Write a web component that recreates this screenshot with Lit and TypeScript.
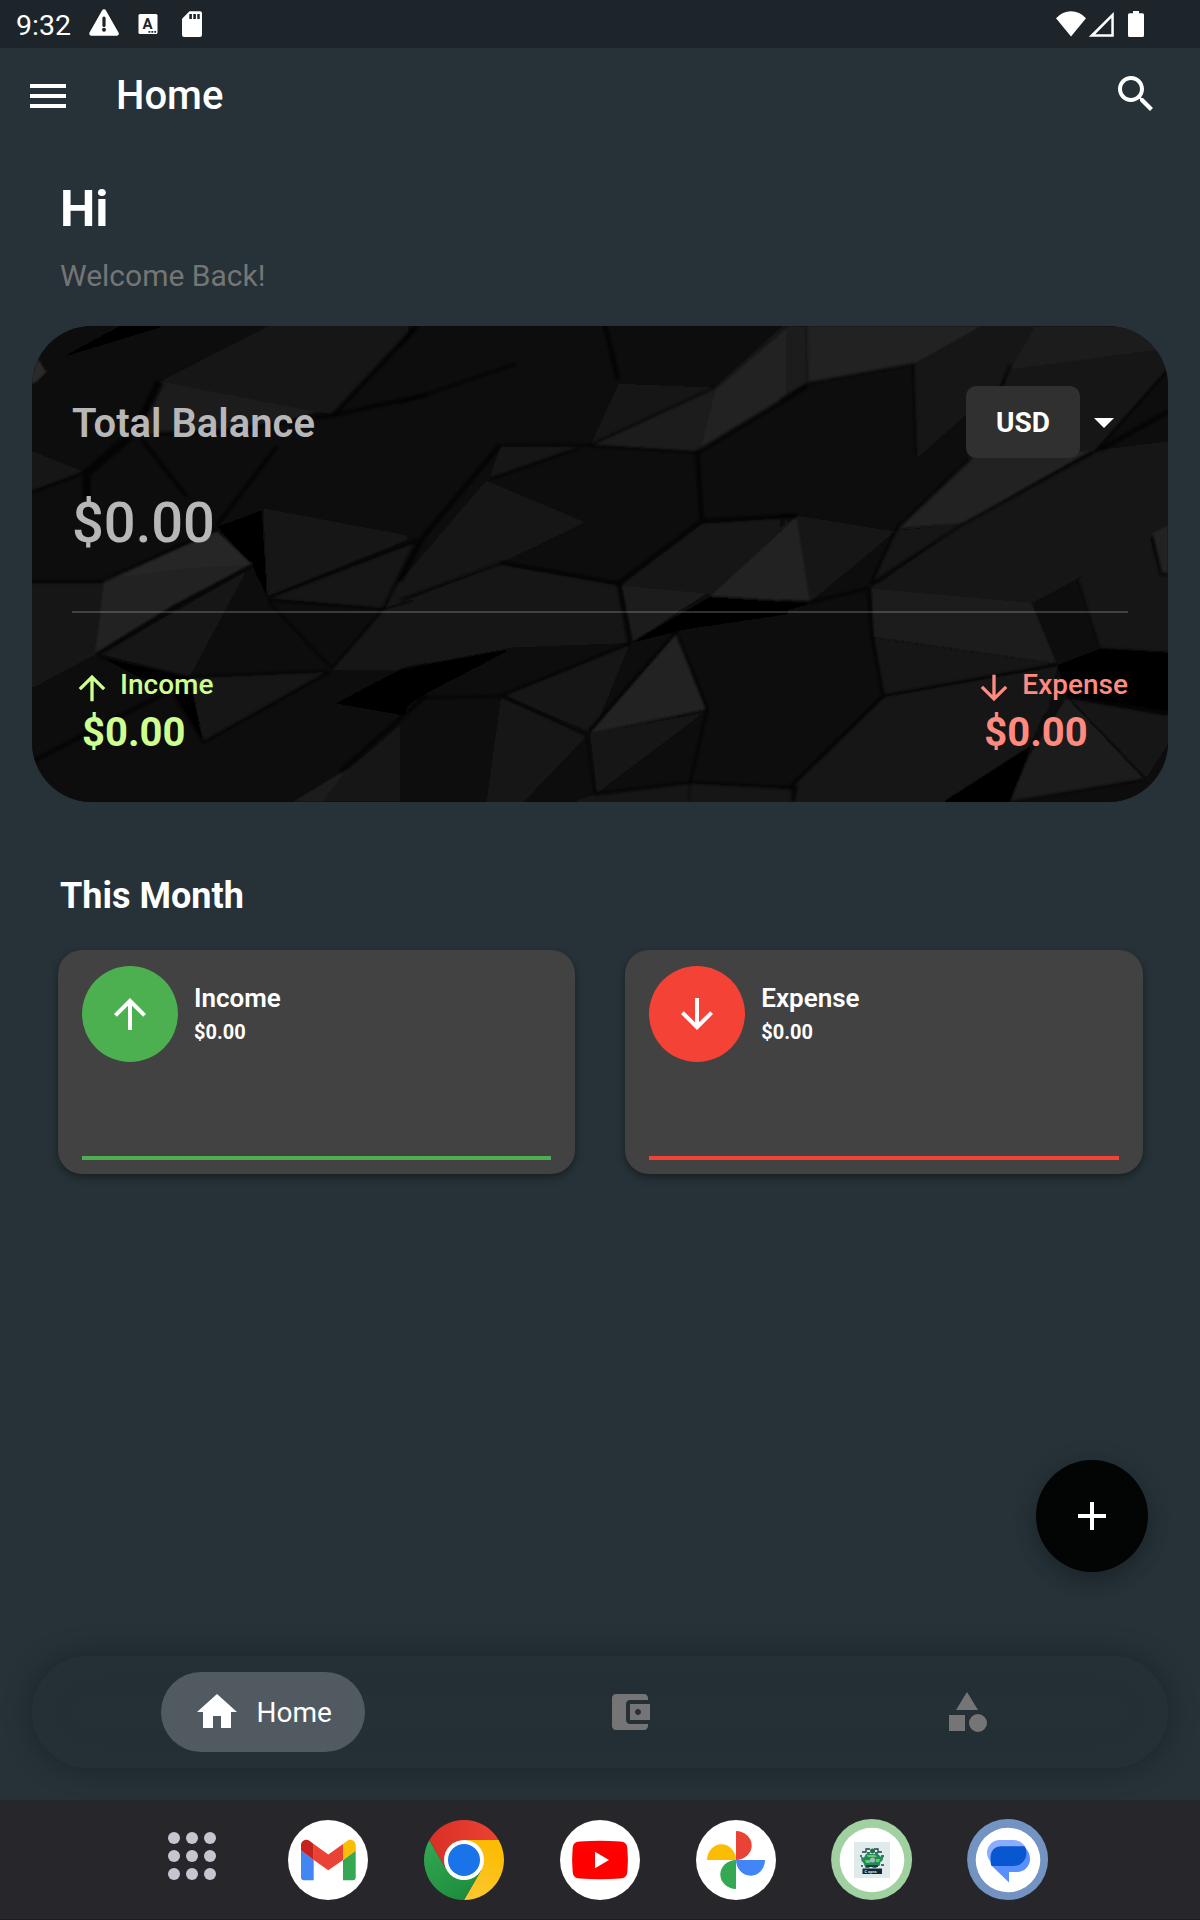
import { LitElement, html, css, svg } from "lit";
import { customElement, property } from "lit/decorators.js";

type Facet = [points: string, fill: string];
type Crease = [points: string, width: number];

interface Tile {
  x: number;
  facets: Facet[];
  creases: Crease[];
}

/* The facets of the dark low-poly surface, three tiles side by side at triple resolution. */
const TILES: Tile[] = [
  {
    x: 20,
    facets: [
      ["0,0 1220,0 1220,1500 0,1500", "#0f0f0f"],
      ["36,33 300,33 120,130 60,110", "#0d0d0d"],
      ["300,33 435,33 120,130", "#020202"],
      ["52,130 78,170 45,205 30,205", "#2a2a2a"],
      ["120,130 440,33 500,33 428,192", "#101010"],
      ["500,33 745,33 428,192", "#0b0b0b"],
      ["745,33 1190,33 940,300 428,196", "#141414"],
      ["1190,33 1220,33 1220,240 940,300", "#101010"],
      ["425,198 890,290 760,330 600,350 400,356 345,365", "#1b1b1b"],
      ["130,170 420,196 195,465 36,408 36,205", "#101010"],
      ["36,408 190,470 36,528", "#151515"],
      ["36,535 190,540 245,797 36,800", "#0a0a0a"],
      ["345,370 220,540 250,795 580,640", "#111"],
      ["365,372 770,372 770,395 590,632", "#090909"],
      ["590,350 940,300 1220,310 1085,310 780,395", "#0b0b0b"],
      ["1085,310 1220,325 1220,660 1180,660", "#0a0a0a"],
      ["780,400 1085,310 1180,662 728,577", "#0e0e0e"],
      ["590,632 770,400 728,580", "#0c0c0c"],
      ["590,635 726,585 742,850 695,750", "#060606"],
      ["250,797 590,650 695,748 460,870 225,1015", "#222"],
      ["270,790 590,650 695,748 480,762", "#282828"],
      ["730,580 1185,665 742,845", "#141414"],
      ["1195,680 1090,880 745,850", "#171717"],
      ["1195,690 1220,680 1220,840 1095,878", "#131313"],
      ["36,803 245,803 225,1020 36,1120", "#131313"],
      ["235,1018 682,765 510,1087", "#121212"],
      ["690,765 745,860 930,1065 510,1087", "#0f0f0f"],
      ["745,858 1090,882 935,1060", "#070707"],
      ["1090,885 1220,850 1220,1060 1140,1065 935,1065", "#131313"],
      ["36,1125 225,1030 440,1125 36,1335", "#101010"],
      ["240,1027 520,1090 550,1282 460,1140", "#060606"],
      ["510,1090 925,1070 550,1282", "#141414"],
      ["36,1345 460,1135 550,1282 200,1460 36,1460", "#111"],
      ["550,1285 925,1070 1140,1068 760,1255 400,1460 200,1460", "#101010"],
      ["750,1258 1140,1065 1220,1055 1220,1150 980,1360", "#080808"],
      ["950,1165 1140,1065 1220,1055 1220,1150 1150,1200", "#040404"],
      ["760,1258 980,1362 820,1460 400,1460", "#0c0c0c"],
      ["985,1360 910,1460 820,1460", "#1c1c1c"],
      ["985,1362 1220,1160 1220,1460 910,1460", "#121212"],
    ],
    creases: [
      ["1190,33 940,300", 14],
      ["420,200 345,350 200,475 200,550", 26],
      ["36,532 190,475", 8],
      ["365,372 500,545", 12],
      ["410,356 600,350 940,300 1220,240", 12],
      ["770,395 590,632", 12],
      ["36,800 245,800 590,640", 8],
      ["235,1020 460,880 695,752", 8],
      ["745,848 1190,675 1090,880", 8],
      ["745,855 1090,882 935,1060 745,860", 7],
      ["235,1025 500,1085 920,1068", 6],
      ["36,1340 440,1132", 12],
      ["460,1140 550,1282 930,1070", 8],
      ["1140,1066 1220,1050", 8],
      ["960,1370 1220,1140", 12],
    ],
  },
  {
    x: 400,
    facets: [
      ["0,0 1220,0 1220,1500 0,1500", "#0f0f0f"],
      ["0,33 610,33 650,195 350,145 0,260", "#0f0f0f"],
      ["0,270 350,148 650,205 310,383 0,320", "#111"],
      ["310,383 650,205 570,385", "#0d0d0d"],
      ["625,33 1150,33 945,215 660,198", "#0e0e0e"],
      ["655,205 945,217 570,390", "#121212"],
      ["1150,33 1220,33 1220,215 897,410 945,215", "#212121"],
      ["945,217 897,410 575,390", "#1b1b1b"],
      ["0,320 300,388 70,665 0,650", "#0a0a0a"],
      ["300,395 545,395 270,490", "#161616"],
      ["285,400 265,495 0,805 70,665", "#0d0d0d"],
      ["0,665 60,675 0,780", "#101010"],
      ["258,497 555,622 300,745 0,855 0,800", "#151515"],
      ["275,490 560,398 888,415 560,622", "#111"],
      ["888,415 905,618 655,803 558,625", "#0e0e0e"],
      ["900,410 1220,220 1220,360 920,400", "#090909"],
      ["900,410 1220,360 1220,600 905,615", "#0d0d0d"],
      ["558,628 320,740 652,800", "#070707"],
      ["0,860 300,748 655,810 690,985 340,998 0,1060", "#131313"],
      ["905,625 1190,605 930,840 665,808", "#121212"],
      ["665,810 920,835 700,980", "#1a1a1a"],
      ["1190,605 1220,605 1220,862 930,842", "#222"],
      ["930,845 1220,862 1220,890 850,945 690,985", "#030303"],
      ["0,1062 340,1000 690,985 300,1142 0,1155", "#080808"],
      ["0,1065 330,1003 50,1150 0,1200", "#030303"],
      ["310,1142 690,987 820,955 565,1250", "#121212"],
      ["690,987 820,955 600,1210", "#0c0c0c"],
      ["40,1158 305,1148 260,1460 0,1460 0,1200", "#0e0e0e"],
      ["303,1150 560,1262 372,1460 260,1460", "#181818"],
      ["560,1265 582,1440 510,1460 372,1460", "#0d0d0d"],
      ["830,955 918,1182 570,1255", "#242424"],
      ["838,947 1220,890 1220,1190 925,1182", "#0f0f0f"],
      ["1220,960 960,1180 1220,1195", "#0b0b0b"],
      ["570,1258 915,1192 590,1436", "#131313"],
      ["915,1190 872,1400 590,1436", "#0b0b0b"],
      ["925,1190 1220,1190 1185,1415 875,1400", "#0e0e0e"],
      ["520,1460 590,1437 870,1405 1180,1420 1185,1460", "#191919"],
    ],
    creases: [
      ["0,95 50,33", 10],
      ["612,20 655,195", 15],
      ["0,265 350,146", 8],
      ["310,388 570,390 945,218 1160,33", 6],
      ["560,392 888,412", 7],
      ["300,390 70,665 0,800", 14],
      ["540,398 270,492", 8],
      ["1220,215 892,412 905,618 1190,602", 13],
      ["905,618 655,805 300,742", 11],
      ["655,805 688,985", 11],
      ["300,745 0,855", 6],
      ["0,1150 300,1143 690,985", 7],
      ["310,1143 560,1262 585,1440", 6],
      ["565,1250 828,950 922,1180 870,1402", 8],
      ["585,1438 870,1402 1190,1420", 8],
      ["870,1402 865,1460", 4],
      ["1190,1410 1180,1460", 8],
    ],
  },
  {
    x: 780,
    facets: [
      ["0,0 1220,0 1220,1500 0,1500", "#111"],
      ["0,33 605,33 400,148 82,205 0,253", "#212121"],
      ["0,33 80,33 82,205 0,253", "#1e1e1e"],
      ["605,33 765,33 690,165 405,148", "#161616"],
      ["765,33 1000,33 1150,103 690,165", "#1d1d1d"],
      ["1000,33 1164,33 1164,103 1130,103", "#1d1d1d"],
      ["690,167 1164,103 1164,160 940,410 560,430", "#151515"],
      ["1164,165 1164,290 960,405", "#070707"],
      ["400,150 690,167 660,210 410,430", "#161616"],
      ["660,210 410,430 560,440 600,300", "#0f0f0f"],
      ["0,265 85,207 398,150 150,350 0,370", "#0a0a0a"],
      ["400,152 410,430 150,350", "#101010"],
      ["0,370 140,353 60,590 0,600", "#0e0e0e"],
      ["140,355 400,433 60,590", "#0b0b0b"],
      ["50,600 405,435 560,430 350,640", "#111"],
      ["572,428 930,408 550,625 352,640", "#242424"],
      ["545,628 960,405 1164,380 1164,640 760,862 280,820", "#161616"],
      ["345,648 545,628 275,805", "#141414"],
      ["640,640 1060,700 760,862 275,815", "#181818"],
      ["52,603 345,650 90,862", "#151515"],
      ["0,640 50,605 90,862 0,855", "#222"],
      ["0,857 90,862 70,880 0,890", "#030303"],
      ["345,650 270,810 90,862", "#0a0a0a"],
      ["0,890 265,822 310,1140 0,1190", "#0d0d0d"],
      ["275,820 755,862 830,1045 280,965", "#1a1a1a"],
      ["280,968 830,1048 310,1142", "#121212"],
      ["755,865 895,795 960,1000 830,1045", "#0a0a0a"],
      ["895,795 1110,670 1140,780 1164,780 1164,1010 960,1000", "#181818"],
      ["1117,655 1164,630 1164,775 1145,775", "#202020"],
      ["960,1000 1164,1012 1164,1190 860,1142 830,1050", "#060606"],
      ["0,1190 305,1148 30,1410 0,1415", "#0c0c0c"],
      ["315,1146 830,1055 800,1200 740,1300 490,1460 38,1460 38,1412", "#171717"],
      ["490,1460 755,1290 690,1460", "#030303"],
      ["850,1140 740,1310 790,1200", "#080808"],
      ["860,1148 1090,1392 690,1460 750,1320", "#1b1b1b"],
      ["865,1148 1164,1200 1164,1290 1100,1390", "#121212"],
      ["1110,1200 1164,1200 1164,1290", "#181818"],
      ["690,1460 1090,1395 1164,1350 1164,1460", "#0a0a0a"],
      ["0,1425 38,1418 38,1460 0,1460", "#191919"],
    ],
    creases: [
      ["80,33 84,205", 3],
      ["0,255 82,205 400,148 408,420", 6],
      ["690,150 665,215", 10],
      ["572,430 350,640 272,805", 9],
      ["1164,165 950,408", 7],
      ["960,405 1164,290", 14],
      ["950,408 545,630 275,805", 7],
      ["0,600 50,602", 9],
      ["0,862 90,862 265,820 275,960 310,1142", 9],
      ["310,1142 830,1048", 7],
      ["310,1142 35,1412", 10],
      ["1115,665 1142,778 1164,780", 7],
      ["0,1418 38,1414 38,1460", 7],
      ["895,795 960,1000 1164,1012", 4],
      ["860,1142 1164,1195", 14],
      ["690,1460 1090,1394", 5],
    ],
  },
];

const ICONS = {
  menu: "M3 18h18v-2H3v2zm0-5h18v-2H3v2zm0-7v2h18V6H3z",
  search:
    "M15.5 14h-.79l-.28-.27C15.41 12.59 16 11.11 16 9.5 16 5.91 13.09 3 9.5 3S3 5.91 3 9.5 5.91 16 9.5 16c1.61 0 3.09-.59 4.23-1.57l.27.28v.79l5 4.99L20.49 19l-4.99-5zm-6 0C7.01 14 5 11.99 5 9.5S7.01 5 9.5 5 14 7.01 14 9.5 11.99 14 9.5 14z",
  up: "M4 12l1.41 1.41L11 7.83V20h2V7.83l5.58 5.59L20 12l-8-8-8 8z",
  down: "M20 12l-1.41-1.41L13 16.17V4h-2v12.17l-5.58-5.59L4 12l8 8 8-8z",
  dropDown: "M7 10l5 5 5-5z",
  plus: "M19 13h-6v6h-2v-6H5v-2h6V5h2v6h6v2z",
  home: "M10 20v-6h4v6h5v-8h3L12 3 2 12h3v8z",
  wallet:
    "M21 18v1c0 1.1-.9 2-2 2H5c-1.11 0-2-.9-2-2V5c0-1.1.89-2 2-2h14c1.1 0 2 .9 2 2v1h-9c-1.11 0-2 .9-2 2v8c0 1.1.89 2 2 2h9zm-9-2h10V8H12v8zm4-2.5c-.83 0-1.5-.67-1.5-1.5s.67-1.5 1.5-1.5 1.5.67 1.5 1.5-.67 1.5-1.5 1.5z",
  category: "M12 2l-5.5 9h11zM17.5 13a4.5 4.5 0 1 0 0 9 4.5 4.5 0 0 0 0-9zM3 13.5h8v8H3z",
};

@customElement("md-icon")
export class MdIcon extends LitElement {
  static styles = css`
    :host { display: block; width: 48px; height: 48px; flex: none; }
    .glyph { display: block; width: 100%; height: 100%; fill: currentColor; }
  `;
  @property() name: keyof typeof ICONS = "menu";
  render() {
    return html`<svg class="glyph" viewBox="0 0 24 24"><path d=${ICONS[this.name]} /></svg>`;
  }
}

@customElement("status-bar")
export class StatusBar extends LitElement {
  static styles = css`
    :host {
      display: flex; align-items: center; height: 48px; box-sizing: border-box;
      padding: 2px 56px 0 16px; background: #1d252a; color: #fff;
    }
    .time { font-size: 28.5px; line-height: 32px; width: 73px; padding-top: 1px; }
    .icon { display: block; height: 30px; flex: none; fill: #fff; margin-top: -2px; }
    .right { margin-left: auto; display: flex; }
    .letter { font: 700 15px Roboto, sans-serif; fill: #1d252a; }
  `;
  render() {
    return html`
      <span class="time">9:32</span>
      <svg class="icon" width="120" viewBox="89 9 120 30">
        <path d="M104 11.5 L116.500 33.500 H91.500 Z" stroke="#fff" stroke-width="4.500" stroke-linejoin="round" />
        <path d="M104 18v7.500" stroke="#1d252a" stroke-width="3.200" stroke-linecap="round" />
        <circle cx="104" cy="29.700" r="2" fill="#1d252a" />
        <rect x="138.500" y="14" width="19" height="20" rx="1.500" />
        <text class="letter" x="142.600" y="28.800">A</text>
        <path d="M148.500 31h1.800v1.800h-1.800zM151.400 31h1.800v1.800h-1.800zM154.300 31h1.800v1.800h-1.800z" fill="#1d252a" />
        <path d="M189.500 11.300H200a2 2 0 0 1 2 2V35a2 2 0 0 1-2 2h-16a2 2 0 0 1-2-2V18.800z" />
        <path d="M189.300 14h2.600v5h-2.600zM193.300 14h2.600v5h-2.600zM197.300 14h2.400v5h-2.400z" fill="#1d252a" />
      </svg>
      <svg class="icon right" width="88" viewBox="1056 9 88 30">
        <path d="M1071 36.500L1056 18.200Q1062.500 11.200 1071 11.200T1086 18.200z" />
        <path d="M1113.800 12v24.800h-25zm-2.500 6l-16 16.200h16z" fill-rule="evenodd" />
        <path d="M1133 11h6v2.300h3.500a1.500 1.500 0 0 1 1.500 1.500V35.500a1.500 1.500 0 0 1-1.500 1.500h-13a1.500 1.500 0 0 1-1.500-1.500V14.800a1.500 1.500 0 0 1 1.500-1.500h3.500z" />
      </svg>
    `;
  }
}

@customElement("balance-card")
export class BalanceCard extends LitElement {
  static styles = css`
    :host {
      display: block; position: relative; margin: 0 32px; height: 476px;
      border-radius: 60px; overflow: hidden; background: #0f0f0f;
    }
    .art { position: absolute; inset: 0; width: 100%; height: 100%; }
    .content { position: relative; padding: 60px 40px 0; }
    .row { display: flex; justify-content: space-between; align-items: center; }
    .label { font-size: 40px; line-height: 48px; font-weight: 600; color: #b7b7b7; padding-top: 4px; }
    .picker { display: flex; align-items: center; color: #fff; }
    .currency {
      background: #303030; border-radius: 10px; height: 72px; width: 114px;
      display: flex; align-items: center; justify-content: center;
      font-size: 28px; font-weight: 700;
    }
    .amount { font-size: 56px; line-height: 66px; font-weight: 500; color: #b7b7b7; margin-top: 32px; }
    .rule { height: 2px; background: rgba(255, 255, 255, 0.19); margin-top: 55px; }
    .flows { display: flex; justify-content: space-between; margin-top: 55px; }
    .income { color: #ccff90; }
    .expense { color: #ff8a80; }
    .head { display: flex; gap: 8px; height: 41px; }
    .arrow { width: 40px; height: 40px; }
    .name { font-size: 28px; line-height: 33px; font-weight: 500; }
    .sum { font-size: 40px; line-height: 48px; font-weight: 700; padding-left: 10px; }
  `;
  render() {
    return html`
      <svg class="art" viewBox="32 326 1136 476" preserveAspectRatio="none">
        <filter id="soft" x="-5%" y="-5%" width="110%" height="110%">
          <feGaussianBlur stdDeviation="1.600" />
        </filter>
        <filter id="edge" x="0" y="0" width="100%" height="100%">
          <feGaussianBlur stdDeviation="0.900" />
        </filter>
        <linearGradient id="fade" gradientUnits="userSpaceOnUse" x1="0" y1="0" x2="60" y2="0">
          <stop offset="0" stop-color="#000" /><stop offset="1" stop-color="#fff" />
        </linearGradient>
        <mask id="join" maskUnits="userSpaceOnUse" x="0" y="0" width="1220" height="1500">
          <rect width="1220" height="1500" fill="url(#fade)" />
        </mask>
        <g filter="url(#edge)">
          ${TILES.map(
            (t, i) => svg`<g transform="translate(${t.x} 315) scale(0.33333)">
              <g mask=${i ? "url(#join)" : "none"}>
                ${t.facets.map(([p, f]) => svg`<polygon points=${p} fill=${f} />`)}
              </g>
            </g>`
          )}
        </g>
        <g filter="url(#soft)">
          ${TILES.map(
            (t) => svg`<g transform="translate(${t.x} 315) scale(0.33333)" fill="none" stroke="#000" stroke-opacity="0.720">
              ${t.creases.map(([p, w]) => svg`<polyline points=${p} stroke-width=${w} />`)}
            </g>`
          )}
        </g>
      </svg>
      <div class="content">
        <div class="row">
          <span class="label">Total Balance</span>
          <div class="picker">
            <span class="currency">USD</span>
            <md-icon name="dropDown"></md-icon>
          </div>
        </div>
        <div class="amount">$0.00</div>
        <div class="rule"></div>
        <div class="flows">
          <div class="income">
            <div class="head"><md-icon class="arrow" name="up"></md-icon><span class="name">Income</span></div>
            <div class="sum">$0.00</div>
          </div>
          <div class="expense">
            <div class="head"><md-icon class="arrow" name="down"></md-icon><span class="name">Expense</span></div>
            <div class="sum">$0.00</div>
          </div>
        </div>
      </div>
    `;
  }
}

@customElement("month-card")
export class MonthCard extends LitElement {
  static styles = css`
    :host {
      display: flex; flex-direction: column; justify-content: space-between;
      box-sizing: border-box; height: 224px; padding: 16px 24px 14px;
      border-radius: 24px; background: #424242; color: #fff;
      box-shadow: 0 4px 8px rgba(0, 0, 0, 0.26), 0 2px 4px rgba(0, 0, 0, 0.14);
    }
    .head { display: flex; gap: 16px; }
    .disc {
      width: 96px; height: 96px; border-radius: 50%;
      display: flex; align-items: center; justify-content: center;
    }
    .line { height: 4px; }
    .up { background: #4caf50; }
    .down { background: #f44336; }
    .name { font-size: 26px; line-height: 32px; font-weight: 600; margin-top: 16px; }
    .sum { font-size: 20px; line-height: 24px; font-weight: 700; margin-top: 6px; }
  `;
  @property() label = "";
  @property() kind: "up" | "down" = "up";
  render() {
    return html`
      <div class="head">
        <div class="disc ${this.kind}"><md-icon name=${this.kind}></md-icon></div>
        <div>
          <div class="name">${this.label}</div>
          <div class="sum">$0.00</div>
        </div>
      </div>
      <div class="line ${this.kind}"></div>
    `;
  }
}

@customElement("bottom-nav")
export class BottomNav extends LitElement {
  static styles = css`
    :host {
      display: flex; align-items: center; box-sizing: border-box;
      height: 112px; margin: 0 32px; padding-left: 128.5px; border-radius: 56px;
      background: #253036; box-shadow: 0 0 30px rgba(0, 0, 0, 0.3), inset 0 0 32px rgba(38, 50, 56, 0.8);
      color: #757575;
    }
    .active {
      display: flex; align-items: center; height: 80px; border-radius: 40px;
      background: #515a61; color: #fff; padding-left: 32px; gap: 16px; font-size: 28px;
      box-sizing: border-box; width: 204px;
    }
    .wallet { margin-left: 241.5px; }
    .category { margin-left: 289px; }
  `;
  render() {
    return html`
      <div class="active"><md-icon name="home"></md-icon><span>Home</span></div>
      <md-icon class="wallet" name="wallet"></md-icon>
      <md-icon class="category" name="category"></md-icon>
    `;
  }
}

@customElement("app-dock")
export class AppDock extends LitElement {
  static styles = css`
    :host {
      display: flex; align-items: center; gap: 52px; box-sizing: border-box;
      height: 120px; padding-left: 150px; background: #27262b; border-bottom: 1px solid #1d1c20;
    }
    .app { display: block; width: 84px; height: 84px; flex: none; }
    .grid { display: block; width: 84px; height: 84px; fill: #c8c4d0; }
    .tiny { font: 700 4px Roboto, sans-serif; fill: #d5e4e2; }
  `;
  render() {
    const dots = [24, 42, 60].flatMap((x) => [20, 38, 56].map((y) => svg`<circle cx=${x} cy=${y} r="6" />`));
    return html`
      <svg class="grid" viewBox="0 0 84 84">${dots}</svg>
      <svg class="app" viewBox="-42 -42 84 84">
        <circle r="40" fill="#fff" />
        <path d="M-27 -9.500L-14.300 0V20.300H-24a3 3 0 0 1-3-3z" fill="#4285f4" />
        <path d="M27.700 -9.500L15 0V20.300H24.700a3 3 0 0 0 3-3z" fill="#34a853" />
        <path d="M15 -16L19 -19C22.500 -21.800 27.700 -19.500 27.700 -14.500V-9.500L15 0z" fill="#fbbc04" />
        <path d="M-14.300 -16L0.300 -5.500 15 -16V0L0.300 10.300 -14.300 0z" fill="#ea4335" />
        <path d="M-14.300 -16L-18.300 -19C-22 -21.800 -27 -19.500 -27 -14.500V-9.500L-14.300 0z" fill="#c5221f" />
      </svg>
      <svg class="app" viewBox="-42 -42 84 84">
        <defs>
          <linearGradient id="cr" x1="0" y1="0" x2="1" y2="0"><stop offset="0" stop-color="#d93025" /><stop offset="1" stop-color="#ea4335" /></linearGradient>
          <linearGradient id="cg" x1="0" y1="0" x2=".6" y2="1"><stop offset="0" stop-color="#34a853" /><stop offset="1" stop-color="#1e8e3e" /></linearGradient>
          <linearGradient id="cy" x1="0" y1="1" x2=".4" y2="0"><stop offset="0" stop-color="#fcc934" /><stop offset="1" stop-color="#fbbc04" /></linearGradient>
        </defs>
        <path d="M0 -20H34.640A40 40 0 0 1 0 40L17.320 10z" fill="url(#cy)" />
        <path d="M-17.320 10L-34.640 -20A40 40 0 0 0 0 40L17.320 10z" fill="url(#cg)" />
        <path d="M0 -20H34.640A40 40 0 0 0 -34.640 -20L-17.320 10z" fill="url(#cr)" />
        <circle r="20" fill="#fff" /><circle r="16" fill="#1a73e8" />
      </svg>
      <svg class="app" viewBox="-42 -42 84 84">
        <circle r="40" fill="#fff" />
        <path d="M-20 -18.500Q0 -20 20 -18.500C25.500 -18.200 27 -16 27.400 -11Q28.400 0 27.400 11C27 16 25.500 18.200 20 18.500Q0 20 -20 18.500C-25.500 18.200 -27 16 -27.400 11Q-28.400 0 -27.400 -11C-27 -16 -25.500 -18.200 -20 -18.500z" fill="#f00" />
        <path d="M-5 -8.200L9 0 -5 8.200z" fill="#fff" />
      </svg>
      <svg class="app" viewBox="-42 -42 84 84">
        <circle r="40" fill="#fff" />
        <path d="M0 0V-29C8.500 -29 15.700 -22.500 15.700 -14.500S8.500 0 0 0z" fill="#ea4335" />
        <path d="M0 0H29C29 8.500 22.500 15.700 14.500 15.700S0 8.500 0 0z" fill="#4285f4" />
        <path d="M0 0V29C-8.500 29 -15.700 22.500 -15.700 14.500S-8.500 0 0 0z" fill="#34a853" />
        <path d="M0 0H-29C-29 -8.500 -22.500 -15.700 -14.500 -15.700S0 -8.500 0 0z" fill="#fbbc04" />
      </svg>
      <svg class="app" viewBox="-42 -42 84 84">
        <circle cx="-.4" cy="-.5" r="40.500" fill="#a1d1a1" />
        <circle r="32.300" fill="#fff" />
        <rect x="-18" y="-18" width="36" height="36" fill="#dfeaea" />
        <path d="M-10 -8h4v-3h4M10 -8h-4v-3h-4M-10 -4h-2M12 -4h-3M-9 6h-2M12 5h-3M-5 -7h3M6 -7h-3" stroke="#234046" stroke-width="1.300" fill="none" />
        <circle cx="0.500" cy="-9" r="2.500" fill="#226b52" />
        <path d="M-11 -3l3 .5 2-3.500h12l3 3 2.500-.5-1 4-2 1.500-1 4h-3v2h-4v-2h-3v2h-4l-2-5-2-2z" fill="#218a58" />
        <path d="M-5 -5h8l2 2h-9zM-7 0h5v3h-4zM4 -1h4l-1 3h-3z" fill="#5cd06b" />
        <circle cx=".5" cy="0" r="2.600" fill="#a6b6c4" />
        <path d="M-6 5h12v2h-12z" fill="#173c40" />
        <rect x="-9.500" y="8.500" width="19.500" height="5.500" fill="#0f2a36" />
        <text class="tiny" x="-7.500" y="12.800">C opns</text>
      </svg>
      <svg class="app" viewBox="-42 -42 84 84">
        <circle cx="-.4" cy="-.5" r="40.500" fill="#7393c2" />
        <circle r="32.300" fill="#fff" />
        <path d="M-17.500 2L18 -11.500Q22 -7 22 -1A13 13 0 0 1 9 12H1V22.500L-14 8Q-17.500 5 -17.500 1z" fill="#5a8fff" />
        <rect x="-21" y="-20" width="39.500" height="25.500" rx="12.700" fill="#8bacff" />
        <path d="M-7.500 -13.700H16.500Q18.500 -11.500 18.500 -7A13 13 0 0 1 5.500 6H-16.500Q-17.500 4 -17.500 -3.700A10 10 0 0 1 -7.500 -13.700z" fill="#0957d0" />
      </svg>
    `;
  }
}

@customElement("app-root")
export class AppRoot extends LitElement {
  static styles = css`
    :host {
      display: flex; flex-direction: column; width: 1200px; height: 1920px; overflow: hidden;
      background: #263238; color: #fff; font-family: Roboto, sans-serif;
    }
    .bar { display: flex; align-items: center; height: 96px; padding: 0 40px 0 24px; }
    .title { font-size: 40px; font-weight: 500; margin-left: 44px; flex: 1; padding-bottom: 2px; }
    .search { margin-bottom: 4px; }
    .hi { font-size: 50px; line-height: 60px; font-weight: 700; padding: 35px 60px 0; }
    .welcome { font-size: 30px; line-height: 36px; color: #757575; padding: 19px 60px 32px; }
    .section { font-size: 36px; line-height: 42px; font-weight: 700; padding: 73px 60px 33px; }
    .months { display: grid; grid-template-columns: 517.3px 517.3px; gap: 50px; padding-left: 58px; }
    .spacer { flex: 1; }
    .fab {
      align-self: flex-end; width: 112px; height: 112px; margin: 0 52px 84px 0; border-radius: 50%;
      background: #030505; display: flex; align-items: center; justify-content: center;
      box-shadow: 0 10px 20px rgba(0, 0, 0, 0.2), 0 2px 28px rgba(0, 0, 0, 0.1);
    }
    .dock { margin-top: 32px; }
  `;
  render() {
    return html`
      <status-bar></status-bar>
      <header class="bar">
        <md-icon name="menu"></md-icon>
        <span class="title">Home</span>
        <md-icon class="search" name="search"></md-icon>
      </header>
      <div class="hi">Hi</div>
      <div class="welcome">Welcome Back!</div>
      <balance-card></balance-card>
      <div class="section">This Month</div>
      <div class="months">
        <month-card label="Income" kind="up"></month-card>
        <month-card label="Expense" kind="down"></month-card>
      </div>
      <div class="spacer"></div>
      <div class="fab"><md-icon name="plus"></md-icon></div>
      <bottom-nav></bottom-nav>
      <app-dock class="dock"></app-dock>
    `;
  }
}
